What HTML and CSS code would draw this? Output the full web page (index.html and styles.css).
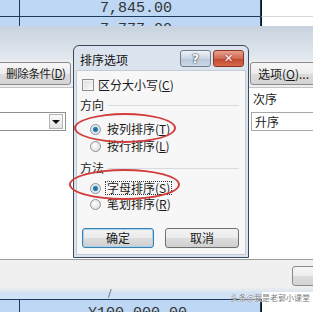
FILE: index.html
```html
<!DOCTYPE html>
<html>
<head>
<meta charset="utf-8">
<link rel="stylesheet" href="styles.css">
</head>
<body>
<div class="page">
  <div class="sheet-top">
    <div class="srow srow-a">
      <div class="cidx"></div><div class="cval">7,845.00</div><div class="crest"></div>
    </div>
    <div class="srow srow-b">
      <div class="cidx"></div><div class="cval">7,777.00</div><div class="crest"></div>
    </div>
  </div>

  <div class="sortdlg">
    <div class="chrome"></div>
    <div class="toolbar">
      <div class="btn btn-del">删除条件(<u>D</u>)</div>
      <div class="btn btn-opt">选项(<u>O</u>)...</div>
    </div>
    <div class="hdr">次序</div>
    <div class="crit">
      <div class="combo"><span class="combo-btn"><span class="tri"></span></span></div>
      <div class="order">升序</div>
    </div>
    <div class="blank"></div>
    <div class="footer"><div class="btn btn-foot"></div></div>
  </div>

  <div class="sheet-bot">
    <div class="band"><div class="band-blue"><span class="tick">/</span></div><div class="band-rest"></div></div>
    <div class="srow srow-d">
      <div class="cidx"></div><div class="cval">¥100,000.00</div><div class="crest"></div>
    </div>
  </div>

  <div class="opts">
    <div class="opts-title">
      <span class="opts-caption">排序选项</span>
      <span class="tbtn tbtn-help">?</span>
      <span class="tbtn tbtn-close">✕</span>
    </div>
    <div class="opts-body">
      <div class="line chk-line"><span class="chk"></span>区分大小写(<u>C</u>)</div>
      <div class="group"><span>方向</span><span class="rule"></span></div>
      <div class="line radio-line r-first"><span class="radio on"></span>按列排序(<u>T</u>)</div>
      <div class="line radio-line r-second"><span class="radio"></span>按行排序(<u>L</u>)</div>
      <div class="group group-2"><span>方法</span><span class="rule"></span></div>
      <div class="line radio-line r-first2"><span class="radio on"></span><span class="focus">字母排序(<u>S</u>)</span></div>
      <div class="line radio-line r-second2"><span class="radio"></span>笔划排序(<u>R</u>)</div>
      <div class="actions">
        <div class="pbtn pbtn-ok">确定</div>
        <div class="pbtn">取消</div>
      </div>
    </div>
  </div>

  <div class="ring ring-1"></div>
  <div class="ring ring-2"></div>
  <div class="wm">头条@我是老郭小课堂</div>
</div>
</body>
</html>
```

FILE: styles.css
```css
* { box-sizing: border-box; margin: 0; padding: 0; }
html, body { width: 313px; height: 312px; overflow: hidden; background: #fff; }
body {
  font-family: "Noto Sans CJK SC", "Noto Sans", sans-serif;
  font-size: 12px;
  color: #1a1a1a;
}
u { text-decoration: underline; text-underline-offset: 1px; }
.page { position: relative; width: 313px; height: 312px; overflow: hidden; }

/* spreadsheet strips */
.sheet-top { height: 26px; overflow: hidden; }
.srow { display: flex; }
.srow-a { height: 17px; }
.srow-b { height: 12px; }
.cidx { width: 20px; background: #bdd7f4; border-right: 1px solid #1d3a5c; }
.cval {
  width: 241px;
  background: #bdd7f4;
  border-right: 1px solid #1d3a5c;
  font-family: "Liberation Mono", monospace;
  font-size: 15px;
  line-height: 16px;
  padding-left: 80px;
  color: #333;
  white-space: nowrap;
  overflow: hidden;
}
.srow-a .cval { padding-top: 1px; }
.crest { flex: 1; background: #fff; border-left: 1px solid #111; }
.srow-a > div { border-bottom: 1px solid #1d3a5c; }
.srow-a .crest { border-bottom-color: #d6d6d6; }
.srow-b .cval { padding-top: 5px; }

/* main sort dialog background */
.sortdlg { height: 266px; display: flex; flex-direction: column; }
.chrome { height: 34px; background: linear-gradient(#c8d3df, #e4e9ef); }
.toolbar {
  height: 28px;
  background: #eceef0;
  display: flex;
  justify-content: space-between;
  align-items: flex-start;
  padding-top: 2px;
  border-bottom: 1px solid #c4c4c4;
}
.btn {
  border: 1px solid #8b8b8b;
  border-radius: 3px;
  background: linear-gradient(#f7f7f7 0%, #ececec 50%, #dcdcdc 51%, #d4d4d4 100%);
  height: 23px;
  line-height: 21px;
  white-space: nowrap;
}
.btn-del { margin-left: -6px; width: 77px; padding-left: 11px; font-size: 11.5px; letter-spacing: -0.3px; overflow: hidden; }
.btn-opt { margin-right: -8px; width: 71px; padding-left: 7px; }
.hdr { height: 20px; background: #fff; padding-left: 253px; line-height: 22px; }
.crit { height: 25px; background: #fff; display: flex; justify-content: space-between; padding-top: 4px; }
.combo {
  width: 68px;
  margin-left: -2px;
  height: 19px;
  border: 1px solid #8f8f8f;
  background: #fff;
  display: flex;
  justify-content: flex-end;
  padding: 1px 2px 1px 0;
}
.combo-btn {
  width: 14px;
  border: 1px solid #b5b5b5;
  background: linear-gradient(#fbfbfb, #e2e2e2);
  display: flex;
  align-items: center;
  justify-content: center;
}
.tri { width: 0; height: 0; border-left: 4px solid transparent; border-right: 4px solid transparent; border-top: 4px solid #111; }
.order {
  width: 62px;
  height: 19px;
  border: 1px solid #a8a8a8;
  border-right: none;
  padding-left: 3px;
  line-height: 17px;
}
.blank { height: 126px; background: #fff; }
.footer { height: 33px; border-top: 1px solid #9c9c9c; background: linear-gradient(#f0f0f0 85%, #d9e4ef); display: flex; justify-content: flex-end; padding-top: 6px; }
.btn-foot { width: 30px; height: 20px; margin-right: -9px; }

.sheet-bot { height: 20px; }
.band { height: 8px; display: flex; }
.band-blue { width: 262px; background: #cfe2f6; border-bottom: 1px solid #1d3a5c; position: relative; }
.tick { position: absolute; left: 108px; top: -4px; font-size: 9px; line-height: 10px; color: #333; }
.band-rest { flex: 1; background: #fff; }
.srow-d { height: 12px; }
.srow-d .cval { padding-left: 68px; padding-top: 6px; line-height: 16px; }

/* options dialog (overlay) */
.opts {
  position: absolute;
  left: 73px;
  top: 45px;
  width: 176px;
  height: 213px;
  border: 1px solid #3a4a5c;
  border-radius: 6px 6px 0 0;
  background: #dbe4ee;
  display: flex;
  flex-direction: column;
}
.opts-title { height: 24px; display: flex; align-items: flex-start; padding: 4px 4px 0 6px; }
.opts-caption { flex: 1; line-height: 16px; font-size: 12px; padding-top: 2px; color: #111; }
.tbtn {
  width: 31px;
  height: 17px;
  border-radius: 3px;
  display: flex;
  align-items: center;
  justify-content: center;
  font-size: 12px;
  font-weight: bold;
  color: #fff;
  font-family: "DejaVu Sans", sans-serif;
}
.tbtn-help {
  border: 1px solid #6f7f90;
  background: linear-gradient(#eef3f8, #c9d6e4 50%, #b7c7da 51%, #cbd8e6);
  text-shadow: 0 0 2px #334, 0 0 1px #334;
}
.tbtn-close {
  margin-left: 2px;
  border: 1px solid #8c3423;
  background: linear-gradient(#e9a08c, #d06a52 50%, #c2452c 51%, #d4694c);
  text-shadow: 0 0 2px #722;
  font-size: 11px;
}
.opts-body {
  flex: 1;
  margin: 0 2px 2px 2px;
  background: #f7f7f7;
  border: 1px solid #c3ccd6;
  padding: 7px 6px 0 3px;
  display: flex;
  flex-direction: column;
}
.line { display: flex; align-items: center; height: 14px; line-height: 14px; white-space: nowrap; }
.chk-line { margin-left: 2px; }
.chk {
  width: 12px; height: 12px;
  border: 1px solid #8e8f8f;
  background: linear-gradient(135deg, #dcdcdc, #fbfbfb);
  box-shadow: inset 0 0 0 1px #f4f4f4;
  margin-right: 4px;
}
.group { display: flex; align-items: center; height: 14px; line-height: 14px; margin-top: 6px; }
.group-2 { margin-top: 8px; }
.rule { flex: 1; height: 1px; background: #d5dbe1; margin-left: 4px; }
.radio-line { margin-left: 10px; }
.r-first { margin-top: 10px; }
.r-second { margin-top: 3px; }
.r-first2 { margin-top: 6px; }
.r-second2 { margin-top: 2px; }
.radio {
  width: 11px; height: 11px;
  border-radius: 50%;
  border: 1px solid #8e9094;
  background: radial-gradient(circle at 40% 40%, #ffffff, #d8d8d8);
  margin-right: 6px;
  flex: none;
}
.radio.on { background: radial-gradient(circle at 50% 50%, #1f5f8f 0, #3b87b8 2.2px, #e6eef4 3.2px, #d6dde4 100%); }
.focus { border: 1px dotted #333; padding: 0 1px; margin-left: -2px; line-height: 12px; height: 14px; }
.actions { display: flex; gap: 11px; margin-top: 17px; margin-left: 2px; }
.pbtn {
  height: 20px;
  width: 74px;
  border: 1px solid #707070;
  border-radius: 3px;
  background: linear-gradient(#f3f3f3 0%, #ebebeb 50%, #dddddd 51%, #cfcfcf 100%);
  text-align: center;
  line-height: 18px;
}
.pbtn-ok { width: 72px; border-color: #3c7fb1; box-shadow: inset 0 0 0 1px #a6d4ef; }

.ring { position: absolute; border: 2px solid #d23c3c; border-radius: 50%; }
.ring-1 { left: 74px; top: 113px; width: 102px; height: 30px; }
.ring-2 { left: 69px; top: 169px; width: 111px; height: 31px; }

.wm {
  position: absolute;
  right: 3px;
  top: 293px;
  font-size: 8px;
  line-height: 10px;
  color: #7a7a7a;
  text-shadow: 0 0 1px #fff, 0 0 1px #fff;
  white-space: nowrap;
}
```
